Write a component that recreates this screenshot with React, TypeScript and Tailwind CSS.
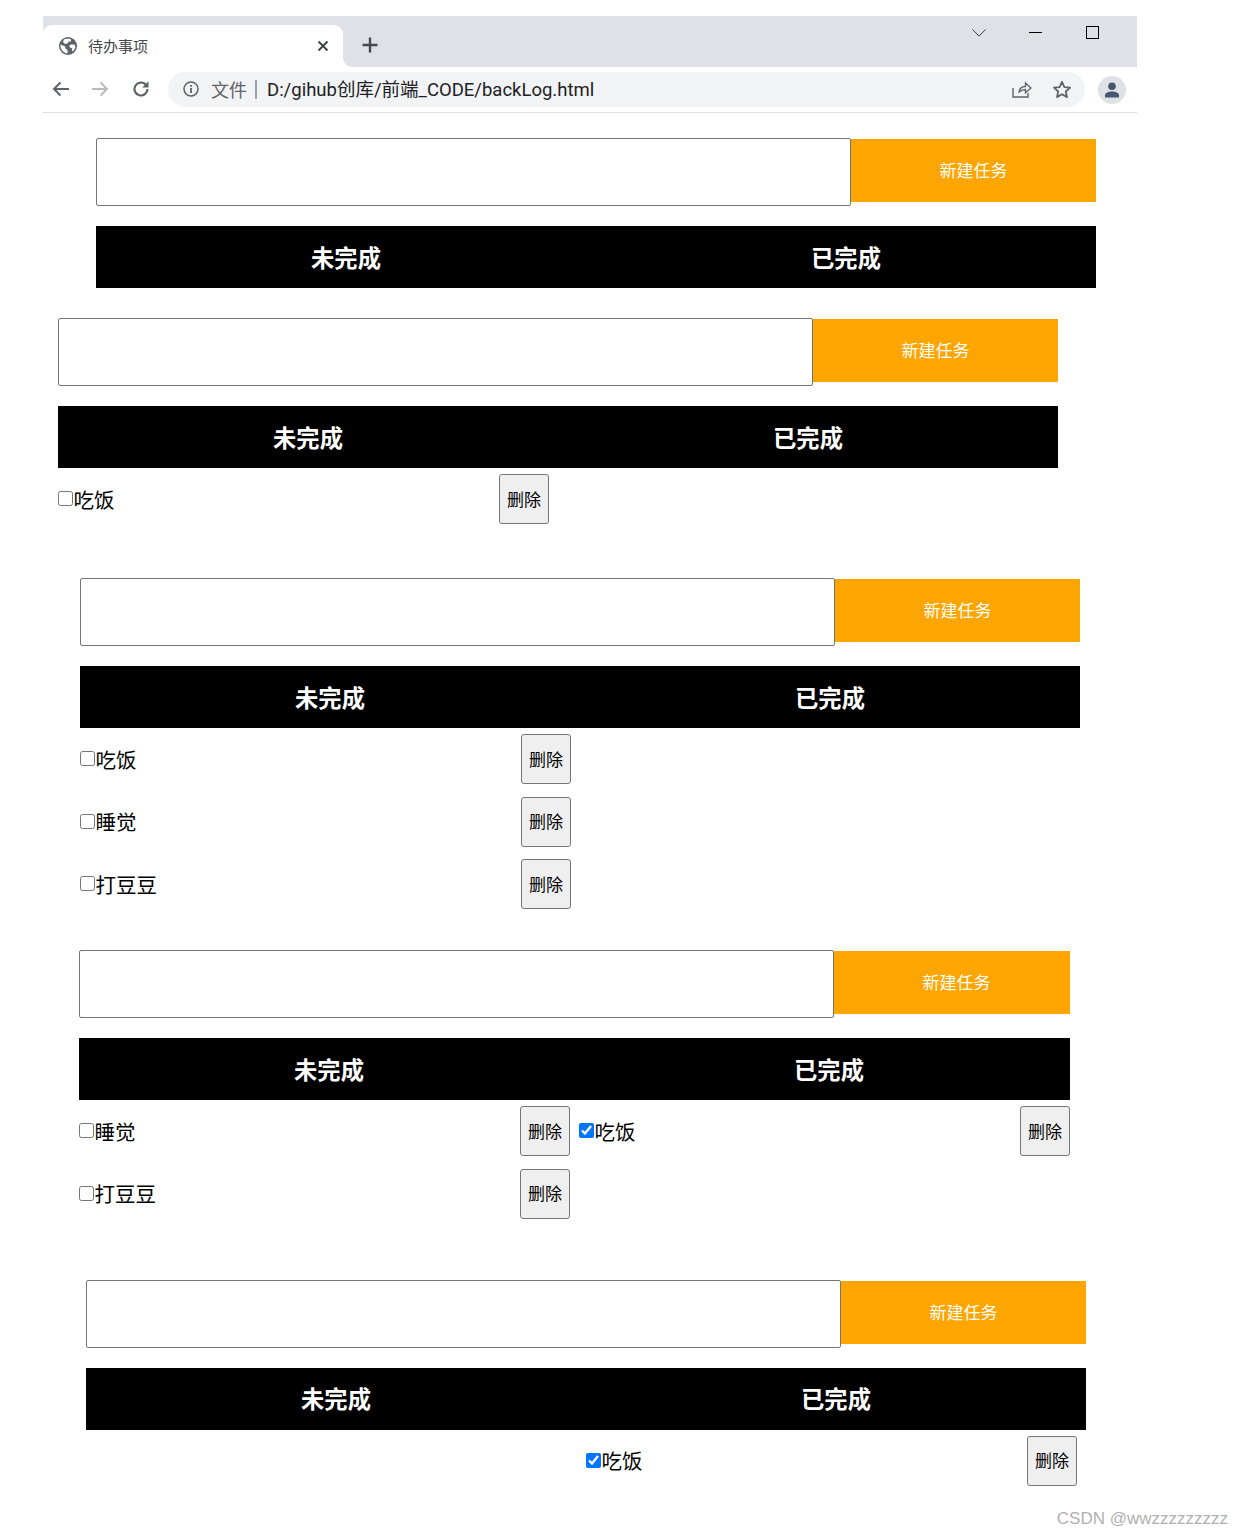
const CJK = { fontFamily: '"Noto Sans CJK SC", "Liberation Sans", sans-serif' };

type Item = { text: string; done?: boolean };

function Row({ item }: { item: Item }) {
  return (
    <div className="flex h-[50px] w-[491px] items-center justify-between">
      <label className="flex items-center text-[20.5px] leading-none text-black">
        <input type="checkbox" readOnly checked={!!item.done} className="m-0 mb-px h-[15px] w-[15px]" />
        <span className="ml-[0.5px]">{item.text}</span>
      </label>
      <button className="h-[50px] w-[50px] rounded-[3px] border border-[#767676] bg-[#efefef] p-0 pb-[2px] text-center text-[17px] leading-none text-black">
        删除
      </button>
    </div>
  );
}

function Block({
  left,
  top,
  width = 1000,
  todo = [],
  done = [],
}: {
  left: number;
  top: number;
  width?: number;
  todo?: Item[];
  done?: Item[];
}) {
  return (
    <section className="overflow-hidden" style={{ marginLeft: left, marginTop: top, width }}>
      <div className="flex items-start">
        <input className="m-0 h-[68px] w-[755px] shrink-0 rounded-[2px] border border-[#767676] bg-white" />
        <button className="mt-px h-[63px] w-[245px] shrink-0 bg-[#ffa500] pb-[2px] text-center text-[17px] leading-none text-white">
          新建任务
        </button>
      </div>
      <div className="mt-[20px] flex h-[62px] w-[1000px] items-center bg-black text-[23.3px] font-bold text-white">
        <div className="w-[500px] text-center">未完成</div>
        <div className="w-[500px] text-center">已完成</div>
      </div>
      {todo.length + done.length > 0 && (
        <div className="mt-[6px] flex w-[1000px] items-start">
          <div className="flex w-[500px] flex-col gap-[12.5px]">
            {todo.map((i) => (
              <Row key={i.text} item={i} />
            ))}
          </div>
          <div className="flex w-[500px] flex-col gap-[12.5px]">
            {done.map((i) => (
              <Row key={i.text} item={i} />
            ))}
          </div>
        </div>
      )}
    </section>
  );
}

function Globe() {
  return (
    <svg width="18" height="18" viewBox="0 0 18 18" className="shrink-0">
      <circle cx="9" cy="9" r="9" fill="#5f6368" />
      <path
        d="M1.5 7.5 6 9.5l.5 2 2 1.5v3.5C5 16 2 13 1.5 9.5zM5 2.2 9 1.5l3 .8V4.5h-2.500L8.500 6.500 6 7 4 5zM12 7.500h3.500l1 3-2.500 4-1-1v-2l-2.500-1.500V8.500z"
        fill="#fff"
      />
    </svg>
  );
}

function Chrome() {
  return (
    <header className="ml-[43px] w-[1094px] bg-white pt-0">
      <div className="relative flex h-[51px] items-end bg-[#dee1e6]">
        <div className="flex h-[42px] w-[300px] items-center rounded-t-[9px] bg-white pl-[16px]">
          <Globe />
          <span className="ml-[11px] w-[229px] text-[15px] text-[#45474a]">待办事项</span>
          <svg width="12" height="12" viewBox="0 0 12 12" className="-mt-px">
            <path d="M1.500 1.500l9 9m0-9-9 9" stroke="#3c4043" strokeWidth="1.800" fill="none" />
          </svg>
        </div>
        <svg width="16" height="16" viewBox="0 0 16 16" className="mb-[14px] ml-[19px]">
          <path d="M8 .5v15M.5 8h15" stroke="#45474a" strokeWidth="2.400" fill="none" />
        </svg>
        <div className="absolute bottom-0 left-[300px] h-[9px] w-[9px] bg-white">
          <div className="h-full w-full rounded-bl-[9px] bg-[#dee1e6]" />
        </div>
        <div className="absolute right-[38px] top-[10px] flex items-center gap-[43px]">
          <svg width="14" height="8" viewBox="0 0 14 8">
            <path d="M.5.5 7 7.200 13.500.5" stroke="#3c4043" strokeWidth="1" fill="none" />
          </svg>
          <div className="h-px w-[13px] bg-black" />
          <div className="ml-[1px] h-[13px] w-[13px] border border-black" />
        </div>
      </div>
      <div className="flex h-[46px] items-center border-b border-[#dadce0] pb-px">
        <svg width="18" height="16" viewBox="0 0 18 16" className="ml-[9px]">
          <path d="M17 8H2M8.500 1.500 2 8l6.500 6.500" stroke="#5f6368" strokeWidth="2" fill="none" />
        </svg>
        <svg width="18" height="16" viewBox="0 0 18 16" className="ml-[21px]">
          <path d="M1 8h15M9.500 1.500 16 8l-6.500 6.500" stroke="#b9bcbf" strokeWidth="2" fill="none" />
        </svg>
        <svg width="18" height="18" viewBox="0 0 18 18" className="ml-[23px]">
          <path d="M15.500 9a6.500 6.500 0 1 1-1.900-4.600" stroke="#5f6368" strokeWidth="2.200" fill="none" />
          <path d="M16.500 1.200v6.300h-6.300z" fill="#5f6368" />
        </svg>
        <div className="ml-[18px] flex h-[35px] w-[917px] items-center rounded-full bg-[#f1f3f4] pl-[15px]">
          <svg width="16" height="16" viewBox="0 0 16 16" className="shrink-0">
            <circle cx="8" cy="8" r="7" stroke="#5f6368" strokeWidth="1.500" fill="none" />
            <path d="M8 7v5M8 4v1.800" stroke="#5f6368" strokeWidth="1.800" fill="none" />
          </svg>
          <span className="ml-[12px] text-[18px] leading-none text-[#5f6368]">文件</span>
          <span className="ml-[8px] h-[19px] w-[2px] bg-[#9aa0a6]" />
          <span
            className="ml-[10px] pt-[2px] text-[18.5px] leading-none text-[#202124]"
            style={{ fontFamily: 'Roboto, "Noto Sans CJK SC", sans-serif' }}
          >
            D:/gihub创库/前端_CODE/backLog.html
          </span>
          <svg width="20" height="18" viewBox="0 0 20 18" className="ml-auto shrink-0">
            <path
              d="M1 8v9h15v-4M7 12c.5-3.500 3-5.500 6.500-5.500V3L19 8l-5.500 4.800V9.500C11 9.500 9 10.500 7 12z"
              stroke="#5f6368"
              strokeWidth="1.400"
              fill="none"
            />
          </svg>
          <svg width="20" height="19" viewBox="0 0 20 19" className="ml-[20px] mr-[13px] shrink-0">
            <path
              d="M10 1.800l2.400 5.300 5.700.6-4.300 3.800 1.200 5.600L10 14.200l-5 2.900 1.200-5.600L1.900 7.700l5.700-.6z"
              stroke="#5f6368"
              strokeWidth="1.800"
              strokeLinejoin="round"
              fill="none"
            />
          </svg>
        </div>
        <div className="ml-[13px] mt-px flex h-[28px] w-[28px] items-center justify-center rounded-full bg-[#dee1e6]">
          <svg width="16" height="16" viewBox="0 0 16 16">
            <circle cx="8" cy="4.300" r="3.800" fill="#46556e" />
            <path d="M1 15.500v-2.500c0-2.200 3.500-3.500 7-3.500s7 1.300 7 3.500v2.500z" fill="#46556e" />
          </svg>
        </div>
      </div>
    </header>
  );
}

export default function App() {
  return (
    <div className="h-[1536px] w-[1244px] overflow-hidden bg-white pt-[16px]" style={CJK}>
      <Chrome />
      <Block left={96} top={25} />
      <Block left={58} top={30} todo={[{ text: "吃饭" }]} />
      <Block left={80} top={54} todo={[{ text: "吃饭" }, { text: "睡觉" }, { text: "打豆豆" }]} />
      <Block
        left={79}
        top={41}
        width={991}
        todo={[{ text: "睡觉" }, { text: "打豆豆" }]}
        done={[{ text: "吃饭", done: true }]}
      />
      <Block left={86} top={61} done={[{ text: "吃饭", done: true }]} />
      <div
        className="mt-[21px] pr-[16px] text-right text-[17px] leading-[24px] text-[#b0b0b0]"
        style={{ fontFamily: '"Liberation Sans", sans-serif' }}
      >
        CSDN @wwzzzzzzzzz
      </div>
    </div>
  );
}
